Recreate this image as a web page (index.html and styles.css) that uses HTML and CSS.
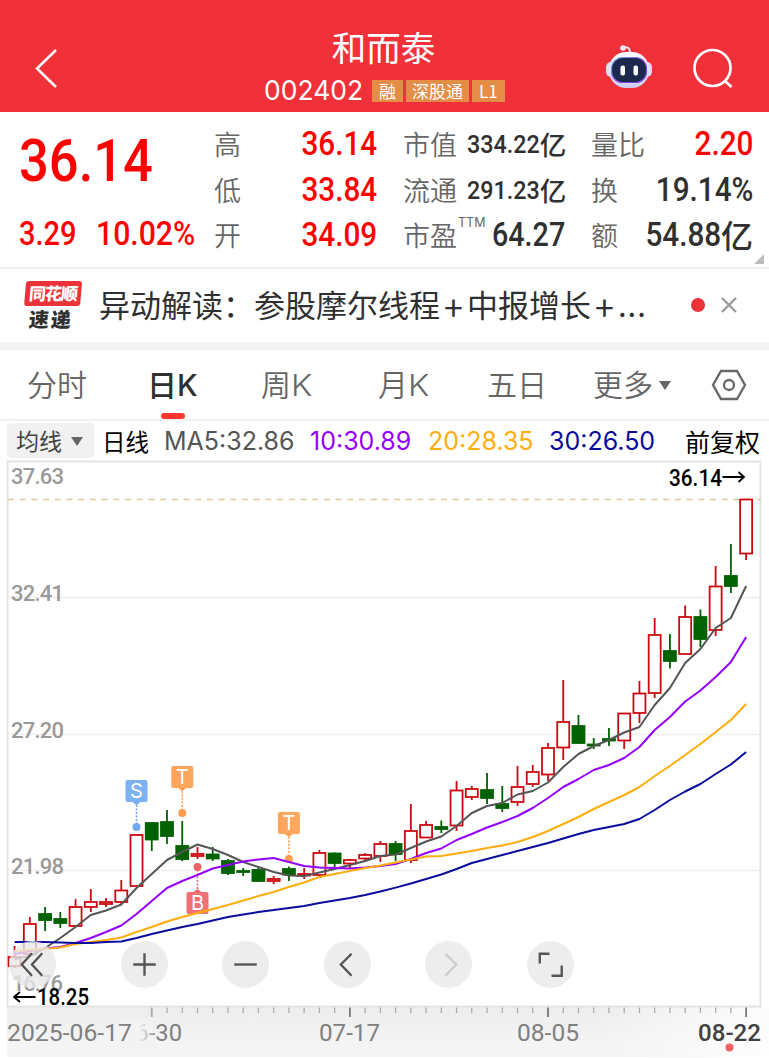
FILE: index.html
```html
<!DOCTYPE html>
<html lang="zh-CN">
<head>
    <meta charset="UTF-8">
    <meta name="viewport" content="width=device-width, initial-scale=1.0">
    <title>和而泰 002402</title>
    <link rel="stylesheet" href="styles.css">
</head>
<body>
    <header class="header">
        <svg class="back" width="30" height="44" viewBox="0 0 30 44"><path d="M25 4 6 22.500 25 41"/></svg>
        <div class="title">
            <h1>和而泰</h1>
            <div class="code"><span class="code-num">002402</span><span class="tag">融</span><span class="tag">深股通</span><span class="tag">L1</span></div>
        </div>
        <div class="header-icons">
            <svg width="48" height="46" viewBox="0 0 48 46">
                <defs>
                    <linearGradient id="head" x1="0" y1="0" x2="0" y2="1"><stop offset="0" stop-color="#fff"/><stop offset="1" stop-color="#cfcdf4"/></linearGradient>
                    <linearGradient id="rim" x1="0" y1="0" x2="1" y2="1"><stop offset="0" stop-color="#6fc4ee"/><stop offset=".5" stop-color="#8b45dc"/><stop offset="1" stop-color="#5a49dd"/></linearGradient>
                </defs>
                <path d="M17 4Q25 1 25 9" fill="none" stroke="#e8e5f8" stroke-width="2"/>
                <circle cx="18" cy="4" r="2.800" fill="#f3e9f8"/>
                <rect x="1" y="18" width="46" height="15" rx="5" fill="#dcdaf5"/>
                <rect x="4" y="8" width="40" height="36" rx="17" fill="url(#head)"/>
                <rect x="6.500" y="13.500" width="35" height="25" rx="11" fill="#1c294d" stroke="url(#rim)" stroke-width="1.200"/>
                <rect x="15.500" y="21.500" width="4.500" height="10" rx="2" fill="#fff"/>
                <rect x="28.500" y="21.500" width="4.500" height="10" rx="2" fill="#fff"/>
            </svg>
            <svg class="search" width="42" height="42" viewBox="0 0 42 42"><circle cx="20.500" cy="20" r="18"/><path d="M33 33 39.500 39"/></svg>
        </div>
    </header>

    <section class="quote">
        <div class="price">
            <div class="last"><span class="num">36.14</span></div>
            <div class="change"><span class="num">3.29</span><span class="num">10.02%</span></div>
        </div>
        <dl class="stats first">
            <div><dt>高</dt><dd class="up"><span class="num">36.14</span></dd></div>
            <div><dt>低</dt><dd class="up"><span class="num">33.84</span></dd></div>
            <div><dt>开</dt><dd class="up"><span class="num">34.09</span></dd></div>
        </dl>
        <dl class="stats">
            <div><dt>市值</dt><dd class="small"><span class="num">334.22</span>亿</dd></div>
            <div><dt>流通</dt><dd class="small"><span class="num">291.23</span>亿</dd></div>
            <div><dt class="pe">市盈<sup>TTM</sup></dt><dd class="ratio"><span class="num">64.27</span></dd></div>
        </dl>
        <dl class="stats">
            <div><dt>量比</dt><dd class="up"><span class="num">2.20</span></dd></div>
            <div><dt>换</dt><dd><span class="num">19.14%</span></dd></div>
            <div><dt>额</dt><dd class="amount"><span class="num">54.88</span>亿</dd></div>
        </dl>
        <span class="corner"></span>
    </section>

    <section class="news">
        <div class="news-logo"><b>同花顺</b><i>速递</i></div>
        <p>异动解读：<span>参股摩尔线程<em>+</em>中报增长<em>+</em><small>...</small></span></p>
        <span class="dot"></span>
        <svg class="close" width="18" height="18" viewBox="0 0 18 18"><path d="M2 2 16 16M16 2 2 16"/></svg>
    </section>

    <nav class="tabs">
        <span>分时</span>
        <span class="active">日K</span>
        <span>周<u>K</u></span>
        <span>月<u>K</u></span>
        <span>五日</span>
        <span class="more">更多<i class="arrow"></i></span>
        <svg width="36" height="32" viewBox="0 0 36 32"><path d="M10 2H26L34 16 26 30H10L2 16Z"/><circle cx="18" cy="16" r="5"/></svg>
    </nav>

    <div class="ma">
        <span class="ma-select">均线<i class="arrow"></i></span>
        <span class="period">日线</span>
        <span class="ma5">MA5:32.86</span>
        <span class="ma10">10:30.89</span>
        <span class="ma20">20:28.35</span>
        <span class="ma30">30:26.50</span>
        <span class="adjust">前复权</span>
    </div>

    <main class="chart">
        <svg id="kline" width="769" height="598" viewBox="0 460 769 598">
            <defs>
                <linearGradient id="axis-bg" x1="0" y1="0" x2="0" y2="1"><stop offset="0" stop-color="#ededed"/><stop offset=".7" stop-color="#f4f4f4"/></linearGradient>
                <linearGradient id="axis-fade"><stop offset="0" stop-color="#fff" stop-opacity="0"/><stop offset="1" stop-color="#fff" stop-opacity=".85"/></linearGradient>
                <linearGradient id="date-fade"><stop offset="0" stop-color="#f3f3f3"/><stop offset=".5" stop-color="#f3f3f3"/><stop offset="1" stop-color="#f3f3f3" stop-opacity="0"/></linearGradient>
            </defs>
            <rect x="7" y="1007" width="762" height="50" fill="url(#axis-bg)"/>
            <rect x="600" y="1007" width="169" height="51" fill="url(#axis-fade)"/>
            <path class="grid" d="M8 597.500H760M8 734.500H760M8 870.500H760"/>
            <rect class="frame" x="7.500" y="461.500" width="753" height="545"/>
            <path class="last-line" d="M8 499.500H761"/>
            <g class="scale">
                <text x="11" y="484" textLength="53">37.63</text>
                <text x="11" y="601" textLength="53">32.41</text>
                <text x="11" y="738" textLength="53">27.20</text>
                <text x="11" y="874" textLength="53">21.98</text>
                <text x="12" y="991" textLength="51">16.76</text>
            </g>
            <g id="candles"></g>
            <g id="markers"></g>
            <g id="averages"></g>
            <g class="extreme">
                <text x="669" y="486" textLength="53" lengthAdjust="spacingAndGlyphs">36.14</text>
                <path d="M722.500 477H744M738.500 472 744 477 738.500 482"/>
            </g>
            <g id="ticks"></g>
            <g class="dates">
                <text x="122" y="1041" textLength="60" lengthAdjust="spacingAndGlyphs">06-30</text>
                <rect x="120" y="1020" width="38" height="28" fill="url(#date-fade)"/>
                <text x="7" y="1041" textLength="125" lengthAdjust="spacingAndGlyphs">2025-06-17</text>
                <text x="319" y="1041" textLength="61" lengthAdjust="spacingAndGlyphs">07-17</text>
                <text x="517" y="1041" textLength="62" lengthAdjust="spacingAndGlyphs">08-05</text>
                <text class="today" x="698" y="1041" textLength="63" lengthAdjust="spacingAndGlyphs">08-22</text>
                <circle cx="729.500" cy="1047.500" r="4" fill="#f4606a"/>
            </g>
        </svg>
        <div class="tools">
            <button><svg viewBox="0 0 46 46"><path d="M22.500 12 12.500 23 22.500 34M32.500 12 22.500 23 32.500 34"/></svg></button>
            <button><svg viewBox="0 0 46 46"><path d="M12 23H34M23 12V34"/></svg></button>
            <button><svg viewBox="0 0 46 46"><path d="M12 23H34"/></svg></button>
            <button><svg viewBox="0 0 46 46"><path d="M27 12.500 16.500 23 27 34"/></svg></button>
            <button class="off"><svg viewBox="0 0 46 46"><path d="M20 12.500 30.500 23 20 34"/></svg></button>
            <button><svg viewBox="0 0 46 46"><path d="M12.500 22V12.500H22M24 34H34V24"/></svg></button>
        </div>
        <svg class="low-label extreme" width="110" height="30" viewBox="0 982 110 30">
            <text x="37" y="1005" textLength="52" lengthAdjust="spacingAndGlyphs">18.25</text>
            <path d="M14 997H35.500M20 992 14 997 20 1002"/>
        </svg>
    </main>

    <script src="chart.js"></script>
</body>
</html>
```
FILE: styles.css
```css
* {
    box-sizing: border-box;
}
body {
    margin: 0;
    width: 769px;
    height: 1058px;
    overflow: hidden;
    background: #fff;
    color: #303030;
    font-family: "Noto Sans CJK SC", sans-serif;
}
h1, p, dl, dd {
    margin: 0;
}
svg {
    display: block;
    flex-shrink: 0;
}
.header {
    display: flex;
    justify-content: space-between;
    height: 112px;
    padding: 24px 35px 0 31px;
    background: #f13139;
    color: #fff;
}
.back {
    margin-top: 22px;
    fill: none;
    stroke: #fff;
    stroke-width: 2.5;
}
.title {
    width: 250px;
    margin-left: 112px;
}
h1 {
    height: 44px;
    line-height: 44px;
    padding-right: 18px;
    margin-left: 7px;
    text-align: center;
    font-size: 34.5px;
    font-weight: 400;
}
.code {
    display: flex;
    align-items: center;
    height: 44px;
}
.code-num {
    width: 108px;
    flex-shrink: 0;
    font: 26.5px Inter, sans-serif;
}
.tag {
    flex-shrink: 0;
    height: 22px;
    padding: 0 7px;
    margin: 1px 3px 0 0;
    line-height: 21px;
    font-size: 17px;
    background: #e48d47;
}
.tag:nth-child(3) {
    padding: 0 6px;
}
.header-icons {
    display: flex;
    gap: 39px;
    padding-top: 20px;
}
.search {
    margin-top: 4px;
    fill: none;
    stroke: #fff;
    stroke-width: 2.7;
}
.quote {
    position: relative;
    display: grid;
    grid-template-columns: 195px 163px 162px 162px;
    column-gap: 26px;
    height: 157px;
    padding: 9px 16px 0 19px;
    border-bottom: 2px solid #eee;
}
.num {
    display: inline-block;
    font-family: Roboto, sans-serif;
    font-weight: 500;
    transform: scaleX(.9);
    transform-origin: right;
}
.price {
    color: #f00;
}
.price .num {
    transform-origin: left;
}
.last {
    height: 70px;
    line-height: 69px;
    font-size: 59px;
}
.last .num {
    transform: scaleX(.89);
}
.change {
    display: flex;
    height: 50px;
    padding-top: 20px;
    line-height: 46px;
    font-size: 33px;
}
.change .num:first-child {
    width: 77px;
    transform: scaleX(.88);
}
.change .num:last-child {
    transform: scaleX(.915);
}
.stats {
    margin-left: -26px;
    margin-right: 26px;
}
.stats > div {
    display: flex;
    justify-content: space-between;
    height: 45.5px;
    line-height: 46px;
    white-space: nowrap;
}
.stats dt {
    position: relative;
    font-size: 27px;
    font-weight: 350;
    color: #666;
}
.stats dd {
    display: flex;
    font-size: 33px;
    font-weight: 500;
}
.stats .small {
    font-size: 26.5px;
    line-height: 45px;
}
.stats .small .num {
    transform: scaleX(.88);
}
.stats .ratio .num {
    transform: scaleX(.87);
}
.stats .amount {
    font-size: 32px;
    line-height: 44px;
}
.stats .amount .num {
    font-size: 33px;
    line-height: 46px;
}
.stats .up {
    color: #f00;
}
.pe sup {
    position: absolute;
    left: 55px;
    top: -1px;
    font: 12.5px/24px Inter, sans-serif;
}
.corner {
    position: absolute;
    right: 5px;
    bottom: 3px;
    border-left: 10px solid transparent;
    border-bottom: 10px solid #bbb;
}
.news {
    display: flex;
    align-items: center;
    height: 81px;
    padding: 0 31px 8px 24px;
    border-bottom: 8px solid #f4f4f4;
}
.news-logo {
    width: 56px;
    height: 50px;
    margin-top: 8px;
    transform: skewX(-5deg);
    text-align: center;
    font-weight: 900;
}
.news-logo b {
    display: block;
    height: 25px;
    line-height: 24px;
    border-radius: 3px;
    background: #eb3238;
    color: #fff;
    font-size: 17px;
    letter-spacing: -1px;
}
.news-logo i {
    display: block;
    line-height: 25px;
    font-size: 20px;
    font-style: normal;
    letter-spacing: 2px;
}
.news p {
    flex: 1;
    padding: 4px 0 0 19px;
    font-size: 31px;
    white-space: nowrap;
}
.news em {
    display: inline-block;
    width: 27px;
    text-align: center;
    font-style: normal;
    font-size: 34px;
    line-height: 30px;
    vertical-align: -4px;
}
.news small {
    font-size: 31px;
    letter-spacing: 1px;
}
.dot {
    width: 14px;
    height: 14px;
    margin: 7px 15px 0 0;
    border-radius: 50%;
    background: #eb3238;
}
.close {
    margin-top: 6px;
    fill: none;
    stroke: #999;
    stroke-width: 2.3;
}
.tabs {
    display: grid;
    grid-template-columns: 120px 114px 117px 109px 106px 118px 36px;
    align-items: center;
    height: 71px;
    padding: 0 0 0 27px;
    border-bottom: 2px solid #f0f0f0;
    font-family: Inter, "Noto Sans CJK SC", sans-serif;
    font-size: 30px;
    line-height: 44px;
    font-weight: 350;
    color: #666;
}
.tabs u {
    display: inline-block;
    text-decoration: none;
    transform: scaleX(1.1);
    transform-origin: left;
}
.tabs .active {
    position: relative;
    font-weight: 500;
    color: #303030;
}
.tabs .active::after {
    content: "";
    position: absolute;
    left: 14px;
    bottom: -12px;
    width: 24px;
    height: 6px;
    border-radius: 3px;
    background: #fc3730;
}
.tabs svg {
    fill: none;
    stroke: #666;
    stroke-width: 2.3;
}
.arrow {
    display: inline-block;
    margin-left: 6px;
    vertical-align: 6px;
    border: 6.5px solid transparent;
    border-top: 9px solid #666;
    border-bottom: 0;
}
.ma {
    display: flex;
    align-items: center;
    height: 39px;
    padding: 0 9px 0 7px;
    font-size: 24px;
    white-space: nowrap;
    color: #000;
}
.ma-select {
    width: 87px;
    height: 35px;
    padding-left: 9px;
    line-height: 35px;
    border-radius: 4px;
    background: #f1f1f1;
    font-size: 23px;
    color: #444;
}
.ma-select .arrow {
    margin-left: 9px;
    vertical-align: 4px;
}
.period {
    width: 70px;
    padding-left: 8px;
    font-size: 23.5px;
}
.ma5, .ma10, .ma20, .ma30 {
    font-family: Inter, sans-serif;
    font-size: 25px;
}
.ma5 {
    width: 146px;
    color: #555;
}
.ma10 {
    width: 118px;
    color: #9500ff;
}
.ma20 {
    width: 121px;
    color: #ffad0d;
}
.ma30 {
    color: #0b0b9e;
}
.adjust {
    margin-left: auto;
    font-size: 25px;
}
.chart {
    position: relative;
    height: 598px;
}
.grid {
    stroke: #eee;
    stroke-width: 1.5;
}
.frame {
    fill: none;
    stroke: #e4e4e4;
    stroke-width: 2;
}
.last-line {
    stroke: #dfc99b;
    stroke-width: 1.5;
    stroke-dasharray: 6 5.7;
}
.scale text {
    font: 500 22px Roboto, sans-serif;
    fill: #999;
}
.candle {
    stroke-width: 1.8;
}
.candle.up {
    fill: #fff;
    stroke: #cb0a10;
}
.candle.down {
    fill: #006200;
    stroke: #006200;
}
.average {
    fill: none;
    stroke-width: 2;
    stroke-linejoin: round;
}
.marker text {
    font: 20px Inter, sans-serif;
    text-anchor: middle;
    fill: #fff;
}
.extreme text {
    font: 500 23px Roboto, sans-serif;
    fill: #000;
}
.extreme path {
    fill: none;
    stroke: #000;
    stroke-width: 1.8;
}
.tick {
    stroke: #aaa;
    stroke-width: 1.3;
}
.tick.major {
    stroke: #777;
    stroke-width: 1.8;
}
.tick.major:first-child {
    stroke: #aaa;
}
.dates text {
    font: 23px Roboto, sans-serif;
    fill: #808080;
}
.dates .today {
    font-weight: 500;
    fill: #404040;
}
.tools {
    position: absolute;
    left: 9px;
    top: 481px;
    display: flex;
    gap: 54.5px;
}
.tools button {
    width: 47px;
    height: 47px;
    padding: 0;
    border: 0;
    border-radius: 50%;
    background: rgba(232, 232, 232, .8);
}
.tools button:first-child {
    margin-right: 10px;
}
.tools path {
    fill: none;
    stroke: #555;
    stroke-width: 2.3;
}
.tools .off path {
    stroke: #ccc;
}
.low-label {
    position: absolute;
    left: 0;
    top: 522px;
}
```
FILE: chart.js
```js
const STEP = 15.24;
const START = 14.6;

// direction, high, body top, body bottom, low
const candles = [
    ['up', 946, 957, 966, 968], ['up', 917, 924, 954, 954], ['down', 907, 914, 920, 931],
    ['down', 912, 919, 923, 928], ['up', 899, 907, 926, 926], ['up', 889, 902, 907, 912],
    ['up', 898, 902, 904, 907], ['up', 880, 890.5, 902, 904], ['up', 835, 835, 886, 886],
    ['down', 822, 823, 839.5, 851], ['down', 810, 822, 836, 844], ['down', 821, 846, 859, 861],
    ['up', 847, 854, 856, 859], ['down', 847, 854.5, 858.5, 861], ['down', 859, 861, 873, 875],
    ['down', 868, 871, 872, 876], ['down', 868, 870, 881, 882], ['up', 876, 879, 881, 884],
    ['down', 866.5, 869, 874.5, 881], ['up', 868, 874, 875.5, 879], ['up', 850, 853, 875, 876],
    ['down', 852.5, 853.5, 863, 867], ['up', 859, 860, 863.5, 868], ['up', 853, 855, 858.5, 861],
    ['up', 841, 844, 856, 862], ['down', 841, 844, 854, 861], ['up', 804, 831, 860, 863],
    ['up', 821, 825, 837.5, 838], ['down', 820.5, 827, 829, 833], ['up', 781, 790.5, 825.5, 831],
    ['up', 786, 789, 797, 800], ['down', 773, 790, 798, 804], ['down', 786, 804, 808, 812],
    ['up', 766, 787, 802, 806], ['up', 765, 772, 784, 787], ['up', 743, 748, 774.5, 781],
    ['up', 680, 722, 747.5, 760], ['down', 715, 726, 743, 744], ['down', 738, 744.5, 745.5, 749],
    ['down', 728, 739, 740.5, 746], ['up', 713, 713.5, 740.5, 749], ['up', 681, 693.5, 713, 723],
    ['up', 618, 635, 693, 698], ['down', 634, 651, 661, 668.5], ['up', 605.5, 617, 654, 654],
    ['down', 609.5, 617, 639, 647], ['up', 566, 586.5, 630, 636], ['down', 544, 576, 586, 593],
    ['up', 499, 499.5, 553.5, 560]
];

const averages = [
    ['#555', [959, 956, 948, 938, 927, 915, 910.5, 904.5, 888, 874, 860, 852, 844.5, 849, 855, 862, 867, 872, 875.5, 876, 872.5, 869, 865, 861, 856, 854.5, 848, 841.5, 836.5, 826, 813, 806, 803, 794.5, 791, 782.5, 767, 754, 746, 740, 732.5, 727, 705, 688, 663, 649, 628, 618, 586]],
    ['#9500ff', [954, 951, 948.5, 947, 943, 938, 932, 925.5, 914, 901, 888, 881, 875, 868.5, 865, 861.5, 859.5, 858, 862, 866, 867.5, 868, 868.5, 867.5, 866, 864, 859, 853, 848.5, 840, 834, 827.5, 822, 816, 808, 798, 787, 779, 770, 765, 758, 747, 730, 717, 701.5, 690.5, 677, 662, 637]],
    ['#ffad0d', [951.5, 950, 949, 947.5, 944, 942, 940, 937.5, 932, 927, 921.5, 917, 913, 909, 905, 900.5, 896, 892, 887, 882.5, 877, 874, 871, 868, 865.5, 862.5, 859.5, 856.5, 856, 853.5, 851, 848, 845.5, 842, 837, 831, 824, 817, 809, 802, 795, 787, 776, 766, 755, 744, 732, 720, 704]],
    ['#0b0b9e', [942, 942, 942, 942.5, 943, 943, 942, 941.5, 938, 934, 930.5, 927, 924, 920.5, 917, 914.5, 912, 910, 908, 906, 903, 900.5, 898, 895, 891.5, 887.6, 883.5, 879, 874.5, 869, 863, 859, 855, 851, 847, 843, 838.5, 834, 830, 827, 824, 819, 810, 800, 791.5, 784, 774, 764.5, 752]]
];

// letter, candle index, box top, dot y, color
const markers = [
    ['S', 8, 780, 827, '#6ea8f2'],
    ['T', 11, 766, 813, '#ff9c4d'],
    ['B', 12, 892, 867, '#ed6267'],
    ['T', 18, 812, 859, '#ff9c4d']
];

const x = i => START + i * STEP;

document.getElementById('candles').innerHTML = candles.map(([dir, high, top, bottom, low], i) =>
    `<g class="candle ${dir}"><path d="M${x(i)} ${high}V${top}M${x(i)} ${bottom}V${low}"/>` +
    `<rect x="${x(i) - 6}" y="${top}" width="12" height="${bottom - top}"/></g>`
).join('');

document.getElementById('averages').innerHTML = averages.map(([color, ys]) =>
    `<polyline class="average" stroke="${color}" points="${ys.map((y, i) => x(i) + ',' + y).join(' ')}"/>`
).join('');

document.getElementById('markers').innerHTML = markers.map(([letter, i, top, dot, color]) => {
    const below = dot < top;
    const edge = below ? top : top + 22;
    const tip = below ? edge - 3 : edge + 3;
    return `<g class="marker"><rect x="${x(i) - 11}" y="${top}" width="22" height="22" rx="2" fill="${color}" opacity=".9"/>` +
        `<path d="M${x(i) - 4} ${edge}L${x(i)} ${tip}L${x(i) + 4} ${edge}" fill="${color}"/>` +
        `<path d="M${x(i)} ${tip}V${dot}" stroke="${color}" stroke-width="1.5" stroke-dasharray="2 1.500"/>` +
        `<circle cx="${x(i)}" cy="${dot}" r="4" fill="${color}"/>` +
        `<text x="${x(i)}" y="${top + 18}">${letter}</text></g>`;
}).join('');

let ticks = '';
for (let i = 9; i < candles.length; i++) {
    const major = (i - 9) % 13 === 0;
    ticks += `<path class="tick ${major ? 'major' : ''}" d="M${x(i)} 1007.500V${major ? 1017 : 1013}"/>`;
}
document.getElementById('ticks').innerHTML = ticks;
```
